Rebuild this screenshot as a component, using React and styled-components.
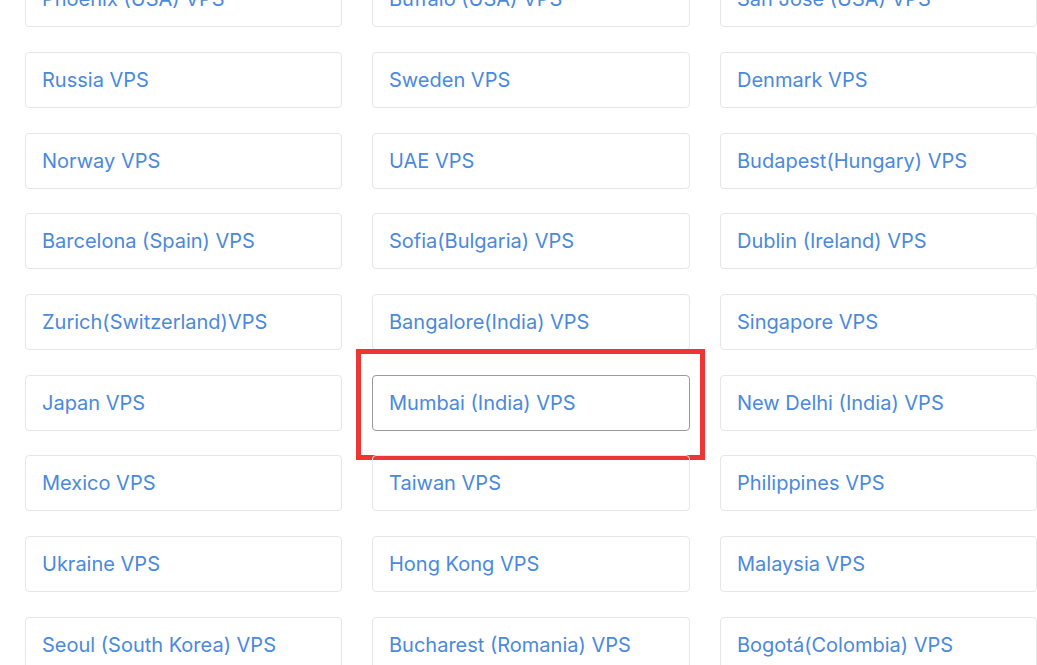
import React from "react";
import styled, { createGlobalStyle } from "styled-components";

const locations = [
  "Phoenix (USA) VPS",
  "Buffalo (USA) VPS",
  "San Jose (USA) VPS",
  "Russia VPS",
  "Sweden VPS",
  "Denmark VPS",
  "Norway VPS",
  "UAE VPS",
  "Budapest(Hungary) VPS",
  "Barcelona (Spain) VPS",
  "Sofia(Bulgaria) VPS",
  "Dublin (Ireland) VPS",
  "Zurich(Switzerland)VPS",
  "Bangalore(India) VPS",
  "Singapore VPS",
  "Japan VPS",
  "Mumbai (India) VPS",
  "New Delhi (India) VPS",
  "Mexico VPS",
  "Taiwan VPS",
  "Philippines VPS",
  "Ukraine VPS",
  "Hong Kong VPS",
  "Malaysia VPS",
  "Seoul (South Korea) VPS",
  "Bucharest (Romania) VPS",
  "Bogotá(Colombia) VPS",
];

const highlighted = "Mumbai (India) VPS";

function App() {
  return (
    <>
      <GlobalStyle />
      <Page>
        <LocationGrid>
          {locations.map((name) => (
            <LocationCard key={name} href="#" $active={name === highlighted}>
              {name}
              {name === highlighted && <Marker />}
            </LocationCard>
          ))}
        </LocationGrid>
      </Page>
    </>
  );
}

const GlobalStyle = createGlobalStyle`
  body {
    margin: 0;
    background: #fff;
    font-family: Inter, "Noto Sans", sans-serif;
  }
`;

const Page = styled.div`
  height: 665px;
  overflow: hidden;
  padding-left: 25px;
`;

// the list is scrolled, so the first row is only partly visible
const LocationGrid = styled.div`
  display: grid;
  grid-template-columns: 317px 318px 317px;
  column-gap: 30px;
  row-gap: 24.7px;
  margin-top: -28.7px;
`;

const LocationCard = styled.a`
  position: relative;
  display: flex;
  align-items: center;
  height: 56px;
  box-sizing: border-box;
  padding: 0 16px;
  border: 1px solid ${(p) => (p.$active ? "#9a9a9a" : "#e6e6e6")};
  border-radius: 4px;
  color: #4a89dc;
  font-size: 20px;
  text-decoration: none;
  white-space: nowrap;
`;

const Marker = styled.span`
  position: absolute;
  left: -17px;
  top: -27px;
  right: -16px;
  bottom: -30px;
  border: 5px solid #ee3535;
  pointer-events: none;
`;

export default App;
